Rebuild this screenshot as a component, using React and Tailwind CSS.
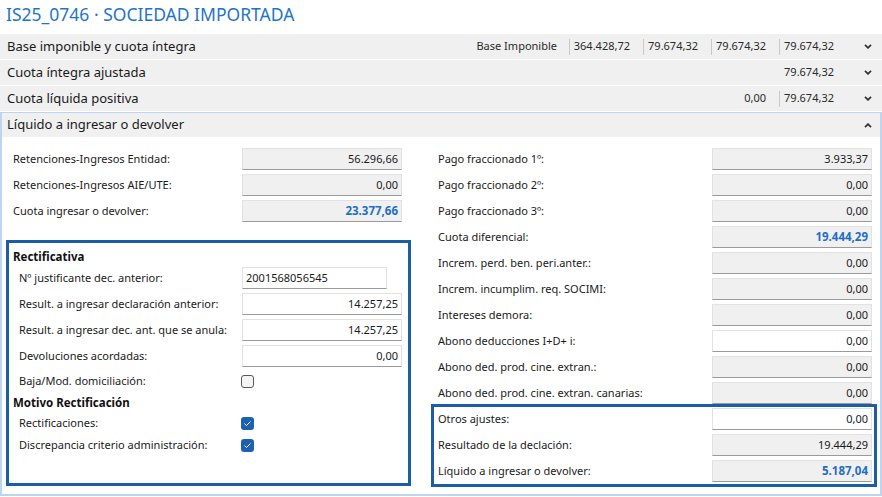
import React from 'react'

const font = "font-['Noto_Sans',sans-serif]"

function Chevron({up}) {
  return (
    <svg width="8" height="5" viewBox="0 0 8 5" className="block">
      <polyline
        points={up ? '1,4.2 4,1.2 7,4.2' : '1,0.8 4,3.8 7,0.8'}
        fill="none"
        stroke="#333"
        strokeWidth="1.8"
      />
    </svg>
  )
}

function Sep() {
  return <div className="w-px h-[16px] bg-[#c9c9c9]" />
}

function Cell({children, w = 'w-[67px]'}) {
  return <div className={`${w} text-right pr-[13px] text-[11px] text-[#2a2a2a]`}>{children}</div>
}

function SectionRow({label, children, up}) {
  return (
    <div className="flex items-center h-[25px] bg-[#f0f0f0] mb-px">
      <div className="pl-[7px] flex-1 text-[13px] text-[#1a1a1a]">{label}</div>
      {children}
      <div className="w-[35px] pl-[17px]"><Chevron up={up} /></div>
    </div>
  )
}

function Field({value, white, blue, w = 'w-[160px]', left}) {
  return (
    <div
      className={`${w} h-[22px] flex items-center border border-[#e2e2e2] border-b-[#9a9a9a] ${white ? 'bg-white' : 'bg-[#f0f0f0]'} ${left ? 'justify-start pl-[3px]' : 'justify-end pr-[3px]'} ${blue ? 'text-[11.5px] text-[#1e6fc4] font-bold' : 'text-[11px] text-[#1a1a1a]'}`}
    >
      {value}
    </div>
  )
}

function Row({label, lw, pl = 'pl-[7px]', ...rest}) {
  return (
    <div className={`flex items-center h-[22px] ${pl}`}>
      <div className={`${lw} text-[11px] text-[#1a1a1a] whitespace-nowrap`}>{label}</div>
      <Field {...rest} />
    </div>
  )
}

function Check({checked}) {
  return checked ? (
    <div className="w-[13px] h-[13px] rounded-[3px] bg-[#1b62b3] flex items-center justify-center">
      <svg width="9" height="7" viewBox="0 0 9 7">
        <polyline points="1.5,3.6 3.5,5.5 7.5,1.5" fill="none" stroke="#fff" strokeWidth="1" />
      </svg>
    </div>
  ) : (
    <div className="w-[13px] h-[13px] rounded-[3px] border border-[#5a5a5a] bg-[#f4f4f4]" />
  )
}

function CheckRow({label, checked, mt = ''}) {
  return (
    <div className={`flex items-center h-[21px] pl-[6px] ${mt}`}>
      <div className="w-[222px] text-[11px] text-[#1a1a1a] whitespace-nowrap">{label}</div>
      <Check checked={checked} />
    </div>
  )
}

export default function App() {
  const rightTop = [
    ['Pago fraccionado 1º:', '3.933,37'],
    ['Pago fraccionado 2º:', '0,00'],
    ['Pago fraccionado 3º:', '0,00'],
    ['Cuota diferencial:', '19.444,29', false, true],
    ['Increm. perd. ben. peri.anter.:', '0,00'],
    ['Increm. incumplim. req. SOCIMI:', '0,00'],
    ['Intereses demora:', '0,00'],
    ['Abono deducciones I+D+ i:', '0,00', true],
    ['Abono ded. prod. cine. extran.:', '0,00'],
    ['Abono ded. prod. cine. extran. canarias:', '0,00'],
  ]

  return (
    <div className={`w-[882px] h-[497px] bg-white overflow-hidden ${font}`}>
      <div className="h-[34px] pl-[6px] pt-[1px] text-[17.5px] leading-[26px] text-[#1f74c9]">
        IS25_0746 · SOCIEDAD IMPORTADA
      </div>

      <SectionRow label="Base imponible y cuota íntegra">
        <div className="pr-[12px] text-[11px] text-[#2a2a2a]">Base Imponible</div>
        <Sep />
        <Cell w="w-[73px]">364.428,72</Cell>
        <Sep />
        <Cell>79.674,32</Cell>
        <Sep />
        <Cell>79.674,32</Cell>
        <Sep />
        <Cell>79.674,32</Cell>
      </SectionRow>
      <SectionRow label="Cuota íntegra ajustada">
        <Cell>79.674,32</Cell>
      </SectionRow>
      <SectionRow label="Cuota líquida positiva">
        <Cell>0,00</Cell>
        <Sep />
        <Cell>79.674,32</Cell>
      </SectionRow>

      <div className="border-2 border-t border-[#bed5f1] h-[384px]">
        <div className="flex items-center h-[24px] bg-[#f0f0f0]">
          <div className="pl-[5px] flex-1 text-[13px] text-[#1a1a1a]">Líquido a ingresar o devolver</div>
          <div className="w-[33px] pl-[17px]"><Chevron up /></div>
        </div>

        <div className="flex pl-[4px] pt-[11px] gap-[20px]">
          {/* left column */}
          <div className="w-[405px] flex flex-col">
            <div className="flex flex-col gap-[4px]">
              <Row label="Retenciones-Ingresos Entidad:" lw="w-[229px]" value="56.296,66" />
              <Row label="Retenciones-Ingresos AIE/UTE:" lw="w-[229px]" value="0,00" />
              <Row label="Cuota ingresar o devolver:" lw="w-[229px]" value="23.377,66" blue />
            </div>

            <div className="mt-[18px] h-[246px] border-[3px] border-[#1b5ea7] pl-[4px] pt-[4px]">
              <div className="h-[20px] flex items-center text-[11.5px] font-bold text-[#111]">Rectificativa</div>
              <div className="flex flex-col gap-[4px]">
                <Row pl="pl-[6px]" label="Nº justificante dec. anterior:" lw="w-[223px]" value="2001568056545" white left w="w-[145px]" />
                <Row pl="pl-[6px]" label="Result. a ingresar declaración anterior:" lw="w-[223px]" value="14.257,25" white />
                <Row pl="pl-[6px]" label="Result. a ingresar dec. ant. que se anula:" lw="w-[223px]" value="14.257,25" white />
                <Row pl="pl-[6px]" label="Devoluciones acordadas:" lw="w-[223px]" value="0,00" white />
              </div>
              <CheckRow label="Baja/Mod. domiciliación:" mt="mt-[4px]" />
              <div className="h-[21px] flex items-center text-[11.5px] font-bold text-[#111]">Motivo Rectificación</div>
              <CheckRow label="Rectificaciones:" checked />
              <CheckRow label="Discrepancia criterio administración:" checked mt="mt-px" />
            </div>
          </div>

          {/* right column */}
          <div className="w-[446px] flex flex-col">
            <div className="flex flex-col gap-[4px]">
              {rightTop.map(([l, v, white, blue]) => (
                <Row key={l} label={l} lw="w-[274px]" value={v} white={white} blue={blue} />
              ))}
            </div>
            <div className="border-[3px] border-[#1b5ea7] pt-[1px] pb-[2px] flex flex-col gap-[4px]">
              <Row pl="pl-[4px]" label="Otros ajustes:" lw="w-[274px]" value="0,00" white />
              <Row pl="pl-[4px]" label="Resultado de la declación:" lw="w-[274px]" value="19.444,29" />
              <Row pl="pl-[4px]" label="Líquido a ingresar o devolver:" lw="w-[274px]" value="5.187,04" blue />
            </div>
          </div>
        </div>
      </div>
    </div>
  )
}
